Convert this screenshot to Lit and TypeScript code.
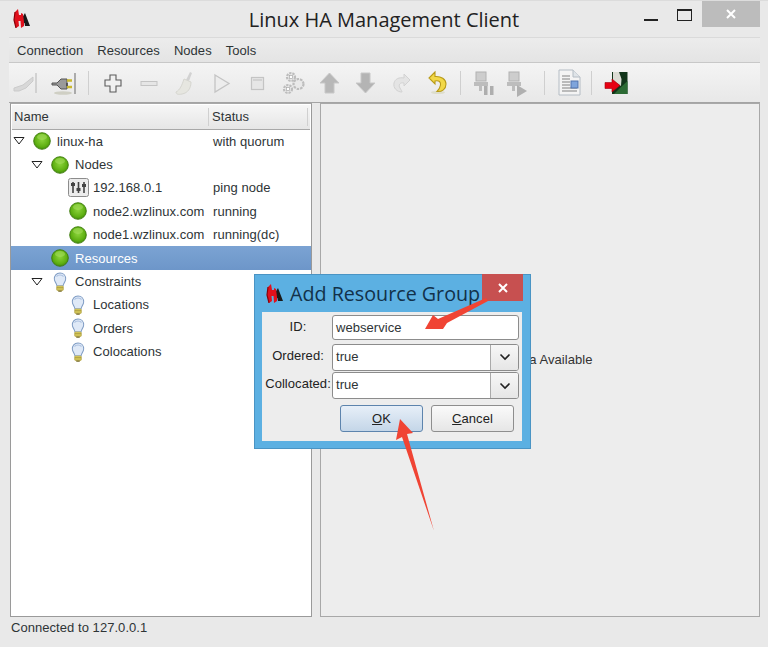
import { LitElement, html, css, svg } from "lit";
import { customElement } from "lit/decorators.js";

const logo = (size: number) => html`<svg class="logo" width=${size} height=${size + 2} viewBox="0 0 17 19">
  <path d="M9 9 L12 4 L17 17 L12 17 L11.500 14 L9 14 Z" fill="#1a1a1a"/>
  <path d="M2 3 L5 0 L6 6 L8 6 L8 4 L10 5 L11 13 L11 17 L8 19 L7.500 12 L5.500 12 L6 17 L3 19 L1 11 Z" fill="#e0101c"/>
  <path d="M3 19 L1 11 L2 3" stroke="#8a0008" fill="none" stroke-width="1.200"/>
</svg>`;

const orb = () => html`<svg class="ico" width="18" height="18" viewBox="0 0 18 18">
  <circle cx="9" cy="9" r="8.300" fill="url(#g)" stroke="#3d7a0c" stroke-width="0.900"/>
  <ellipse cx="9" cy="5" rx="5" ry="3" fill="#a4dc5c" opacity=".6"/>
</svg>`;

const bulb = () => html`<svg class="ico bulb" width="14" height="20" viewBox="0 0 16 20" preserveAspectRatio="none">
  <path d="M8 1 C3.500 1 1.500 4 1.500 7 C1.500 9.500 4 11 4.500 14 L11.500 14 C12 11 14.500 9.500 14.500 7 C14.500 4 12.500 1 8 1 Z" fill="#dfe9f7" stroke="#7f9cc4" stroke-width="1.100"/>
  <path d="M4 4.500 C6 2.500 10 2.500 12 4.500" fill="none" stroke="#a9bfdf" stroke-width="1.200"/>
  <rect x="4.200" y="14" width="7.600" height="4.500" rx="1" fill="#e9dc66" stroke="#a8963a" stroke-width=".7"/>
  <path d="M4.500 15.500 H11.500 M4.500 17 H11.500" stroke="#8d7d2c" stroke-width=".6"/>
  <rect x="6" y="18.500" width="4" height="1.300" fill="#7d7230"/>
</svg>`;

const pingIcon = () => html`<svg class="ico ping" width="21" height="19" viewBox="0 0 21 19">
  <rect x=".5" y=".5" width="20" height="18" rx="2" fill="#ececec" stroke="#8c8c8c"/>
  <path d="M5 4 V15 M10.500 4 V15 M16 4 V15" stroke="#444" stroke-width="1.600"/>
  <rect x="3" y="5" width="4" height="3" fill="#444"/><rect x="8.500" y="10" width="4" height="3" fill="#444"/><rect x="14" y="6" width="4" height="3" fill="#444"/>
</svg>`;

const G = "#c4c4c4";
const tb: Record<string, unknown> = {
  unplug: svg`<path d="M2 21 L11 18 L21 10 L21 14 L14 21 L7 24 L2 24 Z" fill="#d8d8d8" stroke="#cbcbcb"/><path d="M24 6 V26" stroke="#c8c8c8" stroke-width="1.500"/>`,
  plug: svg`<ellipse cx="15" cy="26" rx="9" ry="1.800" fill="#cfcfc4"/>
    <path d="M4 16 H9 L13 12 H19 V22 H13 L9 18 H4 Z" fill="#9a9a9a" stroke="#555"/>
    <path d="M19 13.500 H24 M19 20 H24" stroke="#c9b82e" stroke-width="2.400"/>
    <path d="M19 16 V19" stroke="#444" stroke-width="1.500"/>
    <path d="M27 6 V27" stroke="#8e8e8e" stroke-width="1.400"/>`,
  plus: svg`<path d="M13 8 H19 V13 H24 V19 H19 V25 H13 V19 H8 V13 H13 Z" fill="#f0f0f0" stroke="#5b5b5b" stroke-width="1.100"/>`,
  minus: svg`<rect x="8" y="14.500" width="16" height="4" fill="#e6e6e6" stroke=${G}/>`,
  brush: svg`<path d="M21 5 L23 6 L20 14 L17 13 Z" fill="#d2d2d2"/><path d="M15 12 L22 15 C22 21 19 26 13 27 C9 28 7 27 7 25 C11 23 13 18 15 12 Z" fill="#e6e6e0" stroke="#d6d6d0"/>`,
  play: svg`<path d="M10 8 L24 16.500 L10 25 Z" fill="#ededed" stroke=${G} stroke-width="1.300"/>`,
  stop: svg`<rect x="10.500" y="10.500" width="12" height="12" fill="#e6e6e6" stroke=${G} stroke-width="1.200"/><rect x="12" y="12" width="9" height="2" fill="#d2d2d2"/>`,
  gears: svg`<g fill="#e9e9e9" stroke="#bdbdbd" stroke-width="2.200"><circle cx="14" cy="10" r="4" stroke-dasharray="2.300 1"/><circle cx="21.500" cy="17" r="5" stroke-dasharray="2.500 1"/><circle cx="11" cy="22" r="4" stroke-dasharray="2.300 1"/></g><rect x="12.500" y="8.500" width="3" height="3" fill="#fff" stroke="#aaa" stroke-width=".7"/><rect x="9.500" y="20.500" width="3" height="3" fill="#fff" stroke="#aaa" stroke-width=".7"/>`,
  up: svg`<path d="M16.500 6 L26 16 H21 V26 H12 V16 H7 Z" fill="#b8b8b8" stroke="#c8c8c8"/>`,
  down: svg`<path d="M12 6 H21 V16 H26 L16.500 26 L7 16 H12 Z" fill="#b4b4b4" stroke="#c8c8c8"/>`,
  redo: svg`<path d="M19 7 L25 13 L19 19 V16 C15 15 13 18 15 21 C16 23 17 24 17 25 C12 25 8 21 9 16 C10 12 14 10 19 11 Z" fill="#e4e4e4" stroke="#d2d2d2"/>`,
  undo: svg`<ellipse cx="17" cy="25.500" rx="7" ry="1.600" fill="#ddddcc"/><path d="M14 5 L8 11 L14 17 V14 C18 13 20 15 19.500 18 C19 21 17.500 23 16 24.500 C21 25 25 22 25 17 C25 12 20 9 14 9.500 Z" fill="#f2d848" stroke="#b89a18" stroke-width="1.100"/>`,
  hostPause: svg`<rect x="7" y="5" width="10" height="9" fill="#cdcdcd" stroke="#b2b2b2"/><rect x="5" y="15" width="14" height="4" fill="#bdbdbd"/><rect x="15" y="19" width="3.500" height="9" fill="#aeaeae"/><rect x="21" y="19" width="3.500" height="9" fill="#aeaeae"/><rect x="10" y="19" width="3" height="5" fill="#bdbdbd"/>`,
  hostPlay: svg`<rect x="7" y="5" width="10" height="9" fill="#cdcdcd" stroke="#b2b2b2"/><rect x="5" y="15" width="14" height="4" fill="#bdbdbd"/><path d="M15 18 L25 24 L15 30 Z" fill="#b0b0b0"/><rect x="10" y="19" width="3" height="5" fill="#bdbdbd"/>`,
  doc: svg`<path d="M6 3 H20 L27 10 V28 H6 Z" fill="#f4f4f4" stroke="#b4bcc4"/><path d="M20 3 V10 H27" fill="#dfe4e8" stroke="#b4bcc4"/><path d="M9 9 H17 M9 12 H17 M9 15 H17 M9 18 H17 M9 21 H24 M9 24 H24" stroke="#a8a8a8" stroke-width="1.400"/><rect x="18" y="14" width="7" height="7" fill="#7ea4dc" stroke="#5073ad"/>`,
  exit: svg`<rect x="12" y="5" width="15.500" height="22" fill="#12351a"/><path d="M13 5 H19 L21.500 12 L21 19 L13 14 Z" fill="#dcdcd4"/><path d="M21 20 L27.500 14 V27 H14 Z" fill="#2c6a34"/><path d="M5 15.500 H12 V12 L20 18.500 L12 25 V21.500 H5 Z" fill="#e60012" stroke="#a0000c" stroke-width=".6"/>`,
};

type Item = { k: string; cls?: string } | { sep: string };
const toolbar: Item[] = [
  { k: "unplug" }, { k: "plug" }, { sep: "s1" },
  { k: "plus" }, { k: "minus" }, { k: "brush" }, { k: "play" }, { k: "stop" }, { k: "gears" },
  { k: "up" }, { k: "down" }, { k: "redo" }, { k: "undo" }, { sep: "s2" },
  { k: "hostPause", cls: "nar" }, { k: "hostPlay", cls: "nar" }, { sep: "s3" },
  { k: "doc", cls: "nar" }, { sep: "s1" }, { k: "exit" },
];

type Row = { ind: number; tw?: boolean; icon: () => unknown; name: string; status?: string; sel?: boolean };
const rows: Row[] = [
  { ind: 0, tw: true, icon: orb, name: "linux-ha", status: "with quorum" },
  { ind: 18, tw: true, icon: orb, name: "Nodes" },
  { ind: 36, icon: pingIcon, name: "192.168.0.1", status: "ping node" },
  { ind: 36, icon: orb, name: "node2.wzlinux.com", status: "running" },
  { ind: 36, icon: orb, name: "node1.wzlinux.com", status: "running(dc)" },
  { ind: 18, icon: orb, name: "Resources", sel: true },
  { ind: 18, tw: true, icon: bulb, name: "Constraints" },
  { ind: 36, icon: bulb, name: "Locations" },
  { ind: 36, icon: bulb, name: "Orders" },
  { ind: 36, icon: bulb, name: "Colocations" },
];

@customElement("app-root")
export class AppRoot extends LitElement {
  static styles = css`
    :host { display: block; position: relative; width: 768px; height: 647px; overflow: hidden; background: #e9e9e9; color: #2e3436;
      font: 13px "Liberation Sans", Arial, sans-serif; letter-spacing: .05px; }
    .win { height: 647px; display: flex; flex-direction: column; box-sizing: border-box; padding: 0 8px 9px 9px; border-top: 1px solid #dcdcdc; }
    .title { height: 36px; flex: none; margin: 0 -8px 0 -9px; display: flex; align-items: center; position: relative; justify-content: center; }
    .title .logo { position: absolute; left: 13px; top: 8px; }
    .title h1 { margin: 0; font: 400 20px "Open Sans", sans-serif; color: #222; letter-spacing: 0; }
    .wc { position: absolute; right: 8px; top: 0; display: flex; align-items: flex-start; }
    .min { width: 14px; height: 2px; background: #222; margin: 18px 19px 0 0; }
    .max { width: 13px; height: 9px; border: 1px solid #222; border-top-width: 2px; margin: 8px 10px 0 0; }
    .close { width: 58px; height: 26px; background: #bcbcbc; color: #fff; display: flex; align-items: center; justify-content: center; }
    .menu { flex: none; display: flex; align-items: center; gap: 14px; padding: 0 8px; border-top: 1px solid #dadada; border-bottom: 1px solid #c8c8c8; background: linear-gradient(#ececec, #e4e4e4); box-sizing: border-box; height: 26px; }
    .bar { height: 40px; flex: none; display: flex; align-items: center; padding-left: 1px; background: linear-gradient(#f4f4f4, #e8e8e8); border-bottom: 1px solid #a4a4a4; box-sizing: border-box; }
    .tool { width: 36px; height: 36px; flex: none; display: flex; align-items: center; justify-content: center; }
    .tool.nar { width: 33px; }
    .sep { width: 1px; height: 24px; background: #cfcfcf; flex: none; }
    .sep.s1 { margin: 0 6px; }
    .sep.s2 { margin: 0 7px 0 5px; }
    .sep.s3 { margin: 0 7px 0 10px; }
    .panes { flex: 1; display: flex; min-height: 0; gap: 8px; padding: 0 0 0 1px; }
    .left { width: 300px; flex: none; background: #fff; border: 1px solid #9a9a9a; border-top-color: #a8a8a8; padding-top: 1px; }
    .right { flex: 1; border: 1px solid #a8a8a8; background: #ededed; display: flex; align-items: center; justify-content: center; padding-left: 1px; padding-bottom: 1px; color: #333; }
    .head { height: 24.5px; display: grid; grid-template-columns: 196px 1fr; align-items: center; background: linear-gradient(#f6f6f6, #e6e6e6); border-bottom: 1px solid #a8a8a8; margin: 0 1px; box-sizing: border-box; padding-top: 1px; }
    .head div { padding-left: 2px; height: 18px; line-height: 18px; }
    .head div + div { border-left: 1px solid #d0d0d0; padding-left: 3px; margin-right: 2px; border-right: 1px solid #d0d0d0; }
    .row { height: 23.4px; display: grid; grid-template-columns: 200px 1fr; align-items: center; }
    .row.sel { background: linear-gradient(#7ba3d3, #6d96c9); color: #fff; }
    .cell { display: flex; align-items: center; white-space: nowrap; height: 100%; }
    .tw { width: 12px; flex: none; margin: 0 8px 0 2px; display: flex; }
    .twgap { width: 22px; flex: none; }
    .ico { flex: none; margin-right: 6px; }
    .ico.ping { margin: 0 4px 0 -1px; }
    .ico.bulb { margin: 0 8px 0 2px; }
    .status { padding-left: 2px; }
    .statusbar { height: 21px; flex: none; display: flex; align-items: center; padding-left: 2px; }
    .dlg { position: absolute; left: 254px; top: 274px; width: 277px; height: 175px; box-sizing: border-box; background: #5cb0e2; border: 1px solid #4a94c4; }
    .dlg .dt { position: absolute; left: 11px; top: 5px; display: flex; align-items: center; gap: 7px; font: 400 19.7px "Open Sans", sans-serif; letter-spacing: 0; color: #12314a; white-space: nowrap; }
    .dlg .x { position: absolute; left: 227px; top: -1px; width: 41px; height: 27px; background: #c75050; color: #fff; display: flex; align-items: center; justify-content: center; }
    .body { position: absolute; left: 7px; top: 37px; width: 260px; height: 129px; background: #ededed; box-sizing: border-box; padding: 3px 3px 0 0; display: flex; flex-direction: column; }
    .f { display: grid; grid-template-columns: 70px 1fr; height: 28.5px; align-items: start; }
    .f label { text-align: center; padding: 4px 0 0 2px; color: #222; white-space: nowrap; }
    .inp { height: 25px; box-sizing: border-box; background: #fff; border: 1px solid #8c8c8c; border-radius: 3px; padding-left: 3px; line-height: 23px; display: flex; justify-content: space-between; }
    .inp.tall { height: 27px; line-height: 23px; }
    .dd { width: 27px; border-left: 1px solid #aaa; background: linear-gradient(#f7f7f7, #e6e6e6); display: flex; align-items: center; justify-content: center; border-radius: 0 2px 2px 0; }
    .btns { display: flex; gap: 8px; padding: 4.5px 0 0 78px; }
    .btn { width: 83px; height: 27px; box-sizing: border-box; border: 1px solid #8e8e8e; border-radius: 3px; background: linear-gradient(#fafafa, #e6e6e6); display: flex; align-items: center; justify-content: center; color: #222; }
    .btn.ok { border-color: #5d84ad; background: linear-gradient(#e7eff8, #c4d6e8); }
    u { text-underline-offset: 1px; }
    .ann { position: absolute; left: 0; top: 0; pointer-events: none; }
    .defs { position: absolute; }
  `;

  render() {
    return html`
      <svg class="defs" width="0" height="0">
        <defs>
          <radialGradient id="g" cx=".5" cy=".42" r=".6">
            <stop offset="0" stop-color="#8cd43c"/><stop offset=".7" stop-color="#5fb012"/><stop offset="1" stop-color="#3f8a0a"/>
          </radialGradient>
        </defs>
      </svg>
      <div class="win">
        <div class="title">
          ${logo(17)}
          <h1>Linux HA Management Client</h1>
          <div class="wc">
            <div class="min"></div><div class="max"></div>
            <div class="close"><svg width="10" height="10" viewBox="0 0 10 10"><path d="M1 1 L9 9 M9 1 L1 9" stroke="#fff" stroke-width="2"/></svg></div>
          </div>
        </div>
        <div class="menu"><span>Connection</span><span>Resources</span><span>Nodes</span><span>Tools</span></div>
        <div class="bar">
          ${toolbar.map((t) =>
            "sep" in t
              ? html`<div class="sep ${t.sep}"></div>`
              : html`<div class="tool ${t.cls ?? ""}"><svg width="32" height="32" viewBox="0 0 32 32">${tb[t.k]}</svg></div>`
          )}
        </div>
        <div class="panes">
          <div class="left">
            <div class="head"><div>Name</div><div>Status</div></div>
            ${rows.map(
              (r) => html`<div class="row ${r.sel ? "sel" : ""}">
                <div class="cell" style="padding-left:${r.ind}px">
                  ${r.tw
                    ? html`<span class="tw"><svg width="12" height="8" viewBox="0 0 12 8"><path d="M1 .5 H11 L6 7 Z" fill="#fff" stroke="#222"/></svg></span>`
                    : html`<span class="twgap"></span>`}
                  ${r.icon()}<span>${r.name}</span>
                </div>
                <div class="status">${r.status ?? ""}</div>
              </div>`
            )}
          </div>
          <div class="right">No Data Available</div>
        </div>
        <div class="statusbar">Connected to 127.0.0.1</div>
      </div>

      <div class="dlg">
        <div class="dt">${logo(17)}<span>Add Resource Group</span></div>
        <div class="x"><svg width="10" height="10" viewBox="0 0 10 10"><path d="M1 1 L9 9 M9 1 L1 9" stroke="#fff" stroke-width="2"/></svg></div>
        <div class="body">
          <div class="f"><label>ID:</label><div class="inp">webservice</div></div>
          <div class="f"><label>Ordered:</label><div class="inp tall">true<span class="dd"><svg width="12" height="8" viewBox="0 0 12 8"><path d="M1.500 1.500 L6 6 L10.500 1.500" fill="none" stroke="#222" stroke-width="1.600"/></svg></span></div></div>
          <div class="f"><label>Collocated:</label><div class="inp tall">true<span class="dd"><svg width="12" height="8" viewBox="0 0 12 8"><path d="M1.500 1.500 L6 6 L10.500 1.500" fill="none" stroke="#222" stroke-width="1.600"/></svg></span></div></div>
          <div class="btns">
            <div class="btn ok"><span><u>O</u>K</span></div>
            <div class="btn"><span><u>C</u>ancel</span></div>
          </div>
        </div>
      </div>

      <svg class="ann" width="768" height="647" viewBox="0 0 768 647">
        <path d="M425 329 L433 315 L438 319 L486 298 L488 301 L447 323 L443 329 Z" fill="#f04434"/>
        <path d="M400 419 L413 433 L407 434 L434 531 L402 437 L396 440 Z" fill="#f04434"/>
      </svg>
    `;
  }
}
